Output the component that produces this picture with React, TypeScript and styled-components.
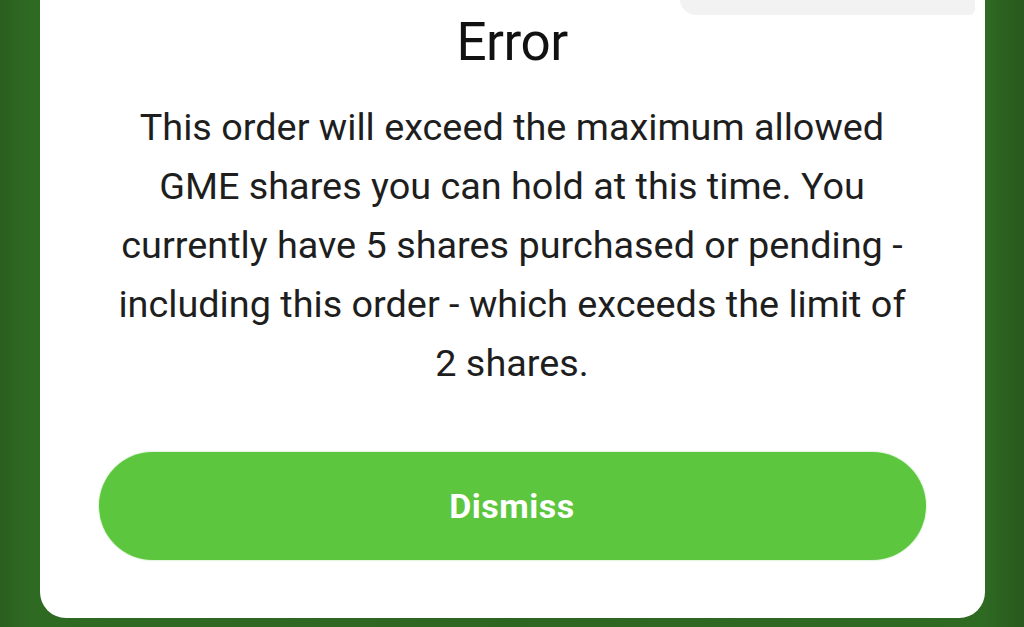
import React from "react";
import styled, { createGlobalStyle } from "styled-components";

const GlobalStyle = createGlobalStyle`
  html, body {
    margin: 0;
    padding: 0;
    height: 100%;
  }
  #root {
    height: 100%;
  }
`;

const Backdrop = styled.div`
  width: 1024px;
  height: 627px;
  overflow: hidden;
  background: linear-gradient(90deg, #2a5f1f 0%, #2f6a23 3%, #2d6621 50%, #2f6a23 96%, #28591d 100%);
  display: flex;
  justify-content: center;
  align-items: flex-end;
  padding-bottom: 9px;
  box-sizing: border-box;
`;

const Card = styled.div`
  position: relative;
  width: 945px;
  height: 660px;
  background: #ffffff;
  border-radius: 26px;
  display: flex;
  flex-direction: column;
  align-items: center;
  justify-content: flex-end;
  padding: 38px 59px 58px;
  box-sizing: border-box;
  font-family: Roboto, "Noto Sans", sans-serif;
`;

// light grey strip peeking in at the top right
const TopBar = styled.div`
  position: absolute;
  top: 0;
  right: 10px;
  width: 295px;
  height: 57px;
  background: #f2f2f2;
  border-radius: 0 0 6px 16px;
`;

const Title = styled.h2`
  margin: 0 0 26px;
  font-size: 53px;
  font-weight: 400;
  color: #111111;
  line-height: 60px;
  letter-spacing: -0.5px;
`;

const Message = styled.p`
  margin: 0;
  font-size: 37.8px;
  line-height: 59px;
  color: #1e1e1e;
  text-align: center;
  white-space: nowrap;
`;

const DismissButton = styled.button`
  margin-top: 59px;
  width: 827px;
  height: 108px;
  flex-shrink: 0;
  border: none;
  border-radius: 54px;
  background: #5dc63f;
  color: #ffffff;
  font-family: Roboto, "Noto Sans", sans-serif;
  font-size: 34px;
  font-weight: 700;
  letter-spacing: 0.5px;
  cursor: pointer;
  box-shadow: 0 0 2px rgba(93, 198, 63, 0.6);
`;

const lines = [
  "This order will exceed the maximum allowed",
  "GME shares you can hold at this time. You",
  "currently have 5 shares purchased or pending -",
  "including this order - which exceeds the limit of",
  "2 shares.",
];

export default function App() {
  return (
    <>
      <GlobalStyle />
      <Backdrop>
        <Card>
          <TopBar />
          <Title>Error</Title>
          <Message>
            {lines.map((l, i) => (
              <React.Fragment key={i}>
                {l}
                {i < lines.length - 1 && <br />}
              </React.Fragment>
            ))}
          </Message>
          <DismissButton>Dismiss</DismissButton>
        </Card>
      </Backdrop>
    </>
  );
}
